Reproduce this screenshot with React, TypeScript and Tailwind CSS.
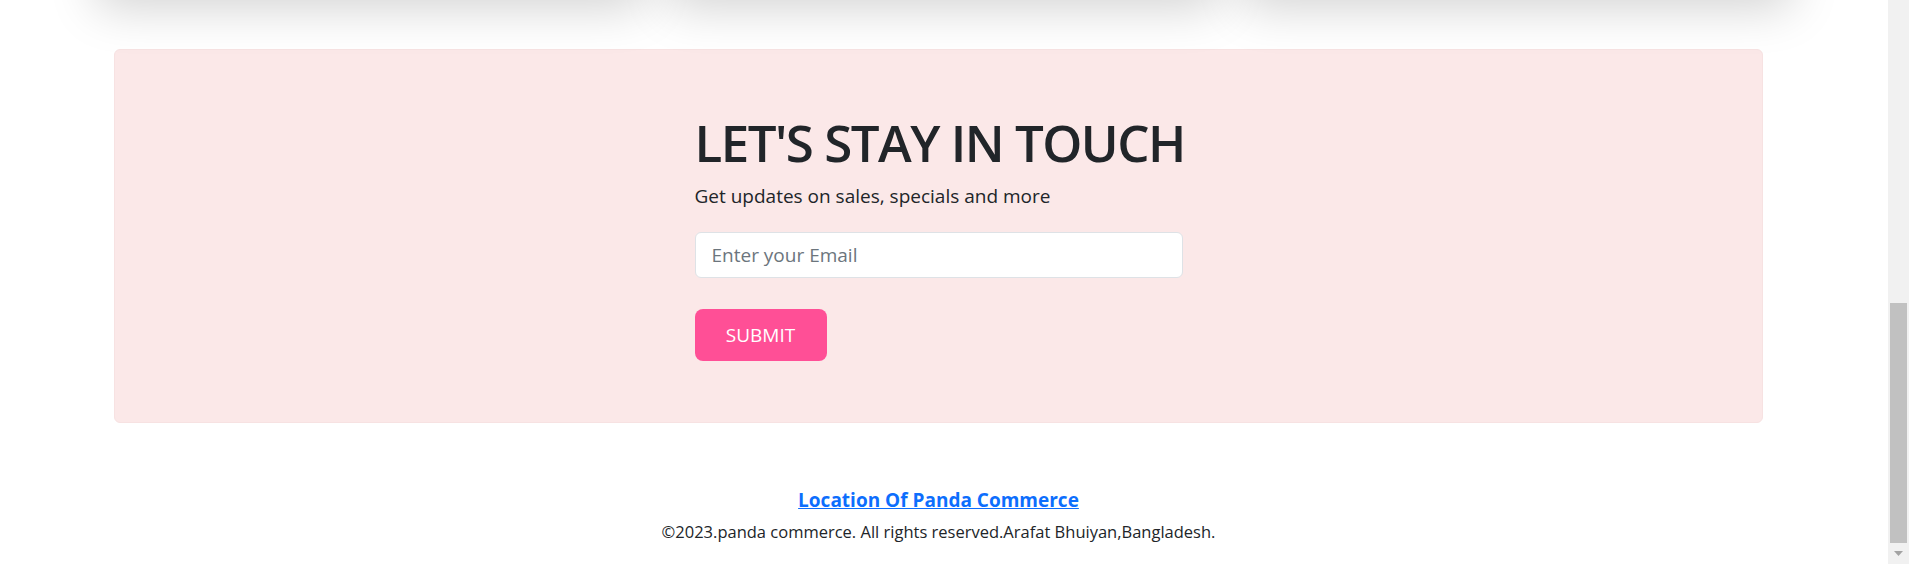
function TopCards() {
  return (
    <div className="mx-[96px] -mt-[108px] flex h-[100px] gap-6">
      <div className="flex-1 rounded-lg bg-white shadow-[0_1rem_3rem_rgba(0,0,0,0.175)]" />
      <div className="flex-1 rounded-lg bg-white shadow-[0_1rem_3rem_rgba(0,0,0,0.175)]" />
      <div className="flex-1 rounded-lg bg-white shadow-[0_1rem_3rem_rgba(0,0,0,0.175)]" />
    </div>
  );
}

function Newsletter() {
  return (
    <div className="mt-[57px] rounded-md border border-[#f7e2e2] bg-[#fbe8e8] pb-[61px] pt-[62px]">
      <div className="mx-auto w-[488px]">
        <h2 className="whitespace-nowrap text-[51px] leading-[1.2] font-semibold tracking-[-1.5px] text-[#212529]">
          LET'S STAY IN TOUCH
        </h2>
        <p className="mt-2 text-[19px] leading-[30px] text-[#212529]">Get updates on sales, specials and more</p>
        <input
          type="email"
          placeholder="Enter your Email"
          className="mt-[21px] h-[46px] w-full rounded-md border border-[#dee2e6] bg-white px-4 text-[19px] text-[#212529] placeholder:text-[#6c757d] outline-none"
        />
        <button className="mt-[31px] h-[52px] w-[132px] rounded-lg bg-[#ff4f96] text-[19px] text-white">SUBMIT</button>
      </div>
    </div>
  );
}

function Footer() {
  return (
    <div className="mt-[62px] text-center">
      <a href="#" className="text-[19px] leading-[30px] font-bold text-[#0d6efd] underline">
        Location Of Panda Commerce
      </a>
      <p className="mt-[3px] text-[16.5px] leading-[27px] text-[#212529]">
        ©2023.panda commerce. All rights reserved.Arafat Bhuiyan,Bangladesh.
      </p>
    </div>
  );
}

function Scrollbar() {
  return (
    <div className="flex w-[21px] flex-col bg-[#f1f1f1]">
      <div className="h-[303px]" />
      <div className="mx-auto h-[240px] w-[17px] bg-[#c1c1c1]" />
      <div className="flex flex-1 items-center justify-center">
        <svg width="9" height="6" viewBox="0 0 9 6">
          <path d="M0 0h9L4.5 5z" fill="#a3a3a3" />
        </svg>
      </div>
    </div>
  );
}

export default function App() {
  return (
    <div className="flex h-[564px] w-full overflow-hidden bg-white" style={{ fontFamily: '"Open Sans", sans-serif' }}>
      <div className="flex-1 overflow-hidden">
        <TopCards />
        <div className="ml-[114px] w-[1649px]">
          <Newsletter />
          <Footer />
        </div>
      </div>
      <Scrollbar />
    </div>
  );
}
